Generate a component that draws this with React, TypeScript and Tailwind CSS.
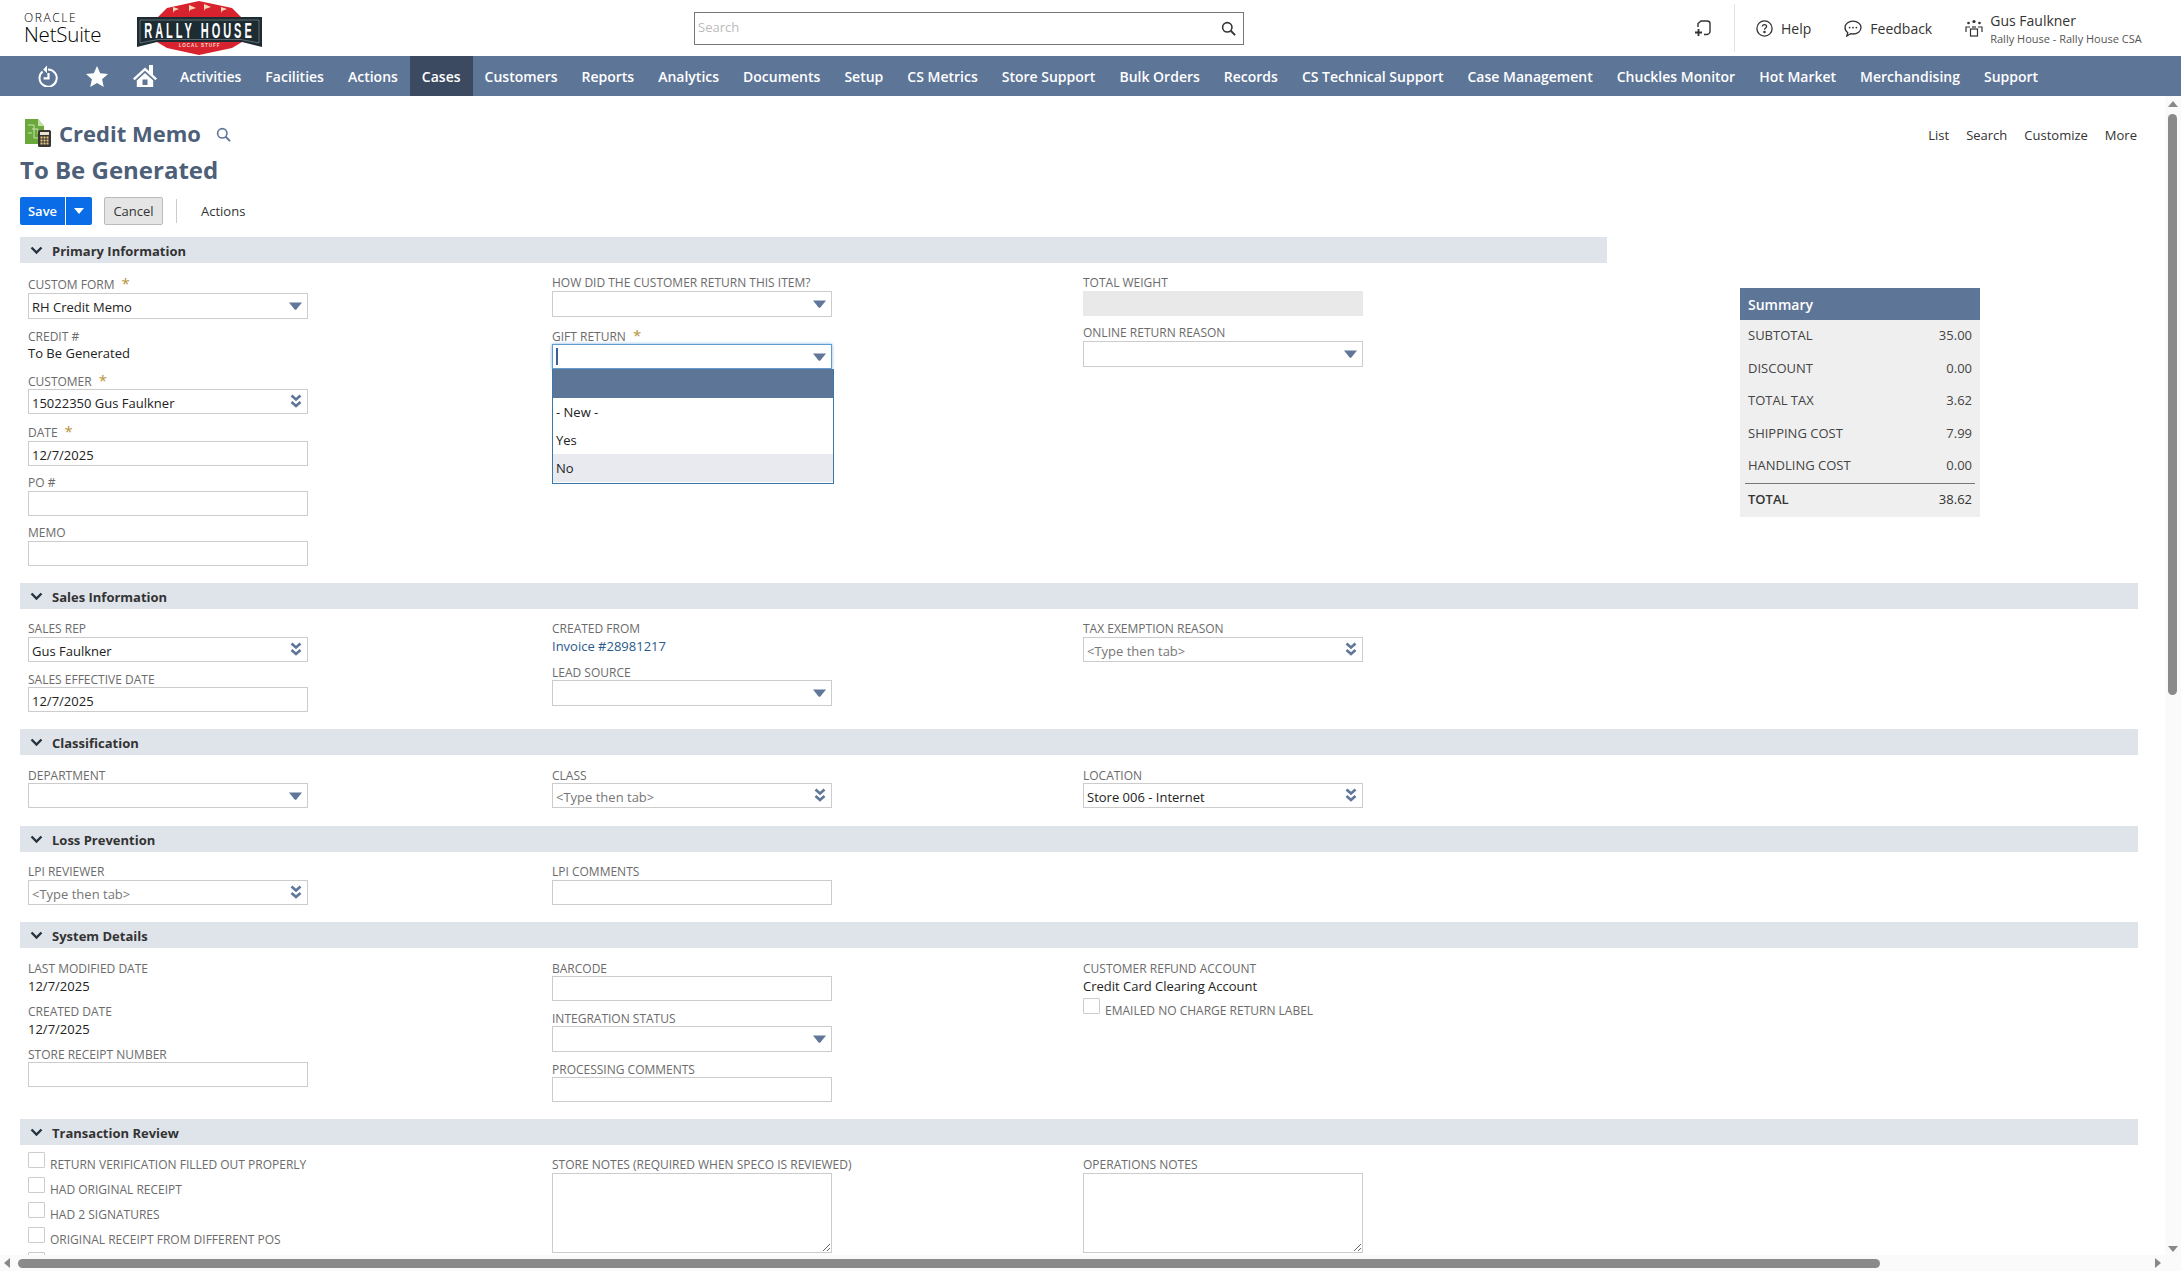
import { ReactNode } from "react"

const navItems = [
  "Activities",
  "Facilities",
  "Actions",
  "Cases",
  "Customers",
  "Reports",
  "Analytics",
  "Documents",
  "Setup",
  "CS Metrics",
  "Store Support",
  "Bulk Orders",
  "Records",
  "CS Technical Support",
  "Case Management",
  "Chuckles Monitor",
  "Hot Market",
  "Merchandising",
  "Support",
]

const summaryRows = [
  ["SUBTOTAL", "35.00"],
  ["DISCOUNT", "0.00"],
  ["TOTAL TAX", "3.62"],
  ["SHIPPING COST", "7.99"],
  ["HANDLING COST", "0.00"],
]

const reviewChecks = [
  "RETURN VERIFICATION FILLED OUT PROPERLY",
  "HAD ORIGINAL RECEIPT",
  "HAD 2 SIGNATURES",
  "ORIGINAL RECEIPT FROM DIFFERENT POS",
  "",
]

const RallyHouseLogo = () => (
  <svg width="125" height="54" viewBox="0 0 125 54">
    <polygon points="20,17 30,7 62,0 95,7 105,17 105,41 95,47 62,54 30,47 20,41" fill="#d8232e" />
    <polygon points="0,16 125,16 125,46 105,41 20,41 0,46" fill="#1d2b33" />
    <polygon points="3,19 122,19 122,42 104,38.5 21,38.5 3,42" fill="none" stroke="#8d979c" strokeWidth="0.6" />
    <polygon points="36,12 36,6 42,8 37,10" fill="#f3d9b8" />
    <polygon points="52,11 52,4 59,7 53,9" fill="#f3d9b8" />
    <polygon points="67,10 67,3 74,6 68,8" fill="#f3d9b8" />
    <polygon points="84,12 84,6 90,8 85,10" fill="#f3d9b8" />
    <text
      x="125"
      y="37.5"
      textAnchor="middle"
      fontFamily="Liberation Sans"
      fontWeight="700"
      fontSize="22"
      letterSpacing="6"
      transform="scale(0.5 1)"
      fill="#fff"
    >
      RALLY HOUSE
    </text>
    <text
      x="62.5"
      y="46"
      textAnchor="middle"
      fontFamily="Liberation Sans"
      fontWeight="700"
      fontSize="4.6"
      letterSpacing="0.9"
      fill="#f6d7c8"
    >
      LOCAL STUFF
    </text>
  </svg>
)

const HistoryIcon = () => (
  <svg width="20" height="22" viewBox="0 0 20 22" fill="none" stroke="#fff" strokeWidth="2">
    <path d="M4.6 6.4 A8.6 8.6 0 1 0 10 4.4" />
    <polygon points="9,0.5 9,8.2 5.2,4.4" fill="#fff" stroke="none" />
    <path d="M10.5 8v5.4H5.6" strokeWidth="2.2" />
  </svg>
)

const StarIcon = () => (
  <svg width="22" height="21" viewBox="0 0 22 21" fill="#fff">
    <polygon points="11,0 14.2,7.2 22,8 16.1,13.2 17.8,21 11,17 4.2,21 5.9,13.2 0,8 7.8,7.2" />
  </svg>
)

const HomeIcon = () => (
  <svg width="24" height="22" viewBox="0 0 24 22" fill="#fff">
    <polygon points="12,2.5 0,13.5 1.6,15.2 12,5.8 22.4,15.2 24,13.5 20,9.8 20,0 16,0 16,6" />
    <path fillRule="evenodd" d="M12 8 L3.8 15.4 V22 H20.2 V15.4 Z M9.5 14.5 H14.5 V20 H9.5 Z" />
  </svg>
)

const CreditMemoIcon = () => (
  <svg width="26" height="28" viewBox="0 0 26 28">
    <polygon points="0,0 13,0 19,7 19,25 0,25" fill="#6aa83b" />
    <polygon points="13,0 19,7 13,7" fill="#c7dfa6" />
    <path d="M3 6h6v13h9M7 10h6v5M3 14h4" stroke="#d6e8bd" strokeWidth="0.9" fill="none" />
    <rect x="13" y="11" width="13" height="17" rx="1.5" fill="#3a3530" />
    <rect x="15" y="13" width="9" height="3" fill="#e8e4d2" />
    <path d="M15.5 18.5h8M15.5 21.5h8M15.5 24.5h8" stroke="#e8c986" strokeWidth="2" strokeDasharray="2 1" />
  </svg>
)

const SearchGlyph = ({ size, color }: { size: number; color: string }) => (
  <svg width={size} height={size} viewBox="0 0 16 16" fill="none" stroke={color} strokeWidth="1.7">
    <circle cx="6.7" cy="6.7" r="5" />
    <path d="M10.4 10.4L15 15" strokeWidth="2" />
  </svg>
)

const Chevron = () => (
  <svg width="13" height="9" viewBox="0 0 13 9" fill="none" stroke="#26323d" strokeWidth="2.4">
    <path d="M1.5 1.5L6.5 6.5L11.5 1.5" />
  </svg>
)

const Caret = () => (
  <svg width="13" height="8" viewBox="0 0 13 8" fill="#607799">
    <path d="M0 0.5H13L7.4 7.4Q6.5 8 5.6 7.4Z" />
  </svg>
)

const DoubleCaret = () => (
  <svg width="12" height="15" viewBox="0 0 12 15" fill="none" stroke="#607799" strokeWidth="2.7">
    <path d="M1.5 1.5L6 5.5L10.5 1.5" />
    <path d="M1.5 8L6 12L10.5 8" />
  </svg>
)

const Label = ({ children, req, className = "" }: { children: ReactNode; req?: boolean; className?: string }) => (
  <div className={`h-4 text-[12px] leading-[18px] text-[#6b6b6b] font-normal whitespace-nowrap ${className}`}>
    {children}
    {req && <span className="ml-[7px] text-[15px] leading-3 text-[#b8923a]">*</span>}
  </div>
)

const Value = ({ children, className = "" }: { children: ReactNode; className?: string }) => (
  <div className={`h-4 text-[13px] leading-4 text-[#222] whitespace-nowrap ${className}`}>{children}</div>
)

const Box = ({
  value,
  muted,
  arrow,
  className = "h-[25px]",
}: {
  value?: string
  muted?: boolean
  arrow?: "single" | "double"
  className?: string
}) => (
  <div className={`flex w-[280px] items-center justify-between border border-[#ccc] bg-white pl-[3px] pr-[5px] ${className}`}>
    <span className={`pt-[2px] text-[13px] leading-4 whitespace-nowrap ${muted ? "text-[#777]" : "text-[#222]"}`}>{value}</span>
    {arrow === "single" && <Caret />}
    {arrow === "double" && <DoubleCaret />}
  </div>
)

const Band = ({ title, className = "" }: { title: string; className?: string }) => (
  <div className={`flex h-[26px] items-center bg-[#dfe4eb] pl-[10px] ${className}`}>
    <Chevron />
    <span className="ml-[9px] pt-[2px] text-[13px] leading-4 font-bold text-[#333]">{title}</span>
  </div>
)

const Section = ({ title, children, className = "" }: { title: string; children: ReactNode; className?: string }) => (
  <section className={className}>
    <Band title={title} />
    <div className="grid grid-cols-[524px_531px_1fr] pl-2">{children}</div>
  </section>
)

const Check = ({ label, className = "" }: { label: string; className?: string }) => (
  <div className={`flex ${className}`}>
    <div className="h-[16px] w-[17px] shrink-0 rounded-[1px] border border-[#ccc] bg-white" />
    <span className="ml-[5px] mt-[4px] h-4 text-[12px] leading-[18px] text-[#6b6b6b] whitespace-nowrap">{label}</span>
  </div>
)

const Notes = ({ className = "" }: { className?: string }) => (
  <textarea readOnly className={`block h-[80px] w-[280px] border border-[#ccc] bg-white ${className}`} />
)

const TopBar = () => (
  <header className="flex h-14 shrink-0 items-center bg-white">
    <div className="ml-6 w-[113px] shrink-0 text-black">
      <div className="h-[12px] text-[12px] leading-[12px] tracking-[1.6px] font-light">ORACLE</div>
      <div className="text-[20.5px] leading-[20px] font-light tracking-[-0.2px]">NetSuite</div>
    </div>
    <RallyHouseLogo />
    <div className="ml-[432px] flex h-[33px] w-[550px] items-center justify-between border border-[#777] pl-[3px] pr-[7px]">
      <span className="text-[13px] text-[#bbb]">Search</span>
      <SearchGlyph size={15} color="#333" />
    </div>
    <svg className="ml-[451px]" width="16" height="17" viewBox="0 0 16 17" fill="none" stroke="#333" strokeWidth="1.4">
      <path d="M3 7V3.5L6 1h6c1.5 0 3 1 3 2.5v8c0 1.5-1.5 3-3 3H9" />
      <path d="M0 12.5h7M3.5 9v7" strokeWidth="1.8" />
    </svg>
    <div className="ml-[23px] h-[48px] w-px bg-[#e3e3e3]" />
    <svg className="ml-[21px]" width="17" height="17" viewBox="0 0 17 17" fill="none" stroke="#333" strokeWidth="1.3">
      <circle cx="8.5" cy="8.5" r="7.6" />
      <path d="M6.4 6.6c0-1.3 1-2 2.1-2s2.1.8 2.1 1.9c0 1.6-2.1 1.5-2.1 3.2" />
      <circle cx="8.5" cy="12" r="0.6" fill="#333" />
    </svg>
    <span className="ml-2 text-[14px] text-[#333]">Help</span>
    <svg className="ml-[33px]" width="18" height="17" viewBox="0 0 18 17" fill="none" stroke="#333" strokeWidth="1.3">
      <path d="M9 1.2c4.4 0 8 2.8 8 6.4S13.4 14 9 14c-.8 0-1.6-.1-2.3-.3L2.8 16l1-3.3C2 11.5 1 9.7 1 7.6 1 4 4.6 1.2 9 1.2Z" />
      <circle cx="5.6" cy="7.6" r="0.9" fill="#333" stroke="none" />
      <circle cx="9" cy="7.6" r="0.9" fill="#333" stroke="none" />
      <circle cx="12.4" cy="7.6" r="0.9" fill="#333" stroke="none" />
    </svg>
    <span className="ml-2 text-[14px] text-[#333]">Feedback</span>
    <svg className="ml-[33px]" width="18" height="18" viewBox="0 0 18 18" fill="none" stroke="#333" strokeWidth="1.2">
      <circle cx="9" cy="2.5" r="1.6" fill="#333" stroke="none" />
      <circle cx="3.5" cy="4" r="1.3" fill="#333" stroke="none" />
      <circle cx="14.5" cy="4" r="1.3" fill="#333" stroke="none" />
      <path d="M1 13V8h4M17 13V8h-4" />
      <rect x="5.5" y="10" width="7" height="7" />
      <path d="M7 8h4" />
    </svg>
    <div className="ml-[7px] pt-[2px] text-[#333]">
      <div className="text-[14px] leading-[18px]">Gus Faulkner</div>
      <div className="mt-[1px] text-[11px] leading-[16px] text-[#555]">Rally House - Rally House CSA</div>
    </div>
  </header>
)

const NavBar = () => (
  <nav className="flex h-10 shrink-0 items-center bg-[#5d7597]">
    <div className="flex w-[168px] shrink-0 items-center pl-[38px]">
      <HistoryIcon />
      <div className="ml-7">
        <StarIcon />
      </div>
      <div className="ml-[25px]">
        <HomeIcon />
      </div>
    </div>
    {navItems.map(item => (
      <div
        key={item}
        className={`flex h-10 items-center px-3 text-[14px] font-semibold whitespace-nowrap text-white ${
          item === "Cases" ? "bg-[#3b4a60]" : ""
        }`}
      >
        {item}
      </div>
    ))}
  </nav>
)

const Summary = () => (
  <aside className="ml-[133px] mt-[51px] h-[229px] w-[240px] shrink-0 bg-[#efefef]">
    <div className="flex h-8 items-center bg-[#5d7597] pl-2 text-[14px] font-semibold text-white">Summary</div>
    <div className="px-2">
      {summaryRows.map(([name, amount]) => (
        <div key={name} className="flex h-[32.5px] items-center justify-between pb-px text-[13px] text-[#444]">
          <span>{name}</span>
          <span>{amount}</span>
        </div>
      ))}
    </div>
    <div className="mx-[5px] border-t border-[#777]" />
    <div className="flex h-[32px] items-center justify-between px-2 text-[13px] text-[#333]">
      <span className="font-semibold">TOTAL</span>
      <span>38.62</span>
    </div>
  </aside>
)

const GiftReturn = () => (
  <div className="relative mt-[11px] w-[280px]">
    <Label req>GIFT RETURN</Label>
    <div className="flex h-[25px] w-[280px] items-center justify-between border border-[#5f9ccf] bg-white pl-[3px] pr-[5px] shadow-[0_0_3px_#7fb4e0]">
      <div className="h-[17px] w-[2px] bg-[#3c5f9a]" />
      <Caret />
    </div>
    <div className="absolute left-0 top-[41px] z-10 w-[282px] border border-t-0 border-[#3a78a8] bg-white pb-px text-[13px] text-[#222]">
      <div className="h-[29px] bg-[#5d7597]" />
      <div className="flex h-[28px] items-center pl-[3px] pt-[2px]">- New -</div>
      <div className="flex h-[28px] items-center pl-[3px] pt-[2px]">Yes</div>
      <div className="flex h-[28px] items-center bg-[#e8eaf0] pl-[3px] pt-[2px]">No</div>
    </div>
  </div>
)

export default function App() {
  return (
    <div className="relative flex h-screen flex-col overflow-hidden bg-white [font-family:'Open_Sans',sans-serif]">
      <TopBar />
      <NavBar />

      <main className="min-h-0 flex-1 overflow-hidden pl-5">
        <div className="w-[2118px]">
          <div className="flex justify-between pt-[19px]">
            <div className="flex h-9 items-center pl-[5px]">
              <CreditMemoIcon />
              <h1 className="ml-2 text-[22px] font-bold text-[#4d5f79]">Credit Memo</h1>
              <div className="ml-[15px] mt-[3px]">
                <SearchGlyph size={15} color="#5d7597" />
              </div>
            </div>
            <div className="flex h-9 items-center pr-px pt-[5px] text-[13px] text-[#333]">
              <span>List</span>
              <span className="ml-[17px]">Search</span>
              <span className="ml-[17px]">Customize</span>
              <span className="ml-[17px]">More</span>
            </div>
          </div>
          <h2 className="mt-[3px] h-8 text-[24px] leading-8 font-bold text-[#4d5f79]">To Be Generated</h2>

          <div className="mt-[11px] flex h-7 items-center">
            <div className="flex h-7 w-[72px] items-center rounded-[2px] bg-[#0b6ce8] text-[13px] font-semibold text-white">
              <span className="h-7 w-[46px] border-r border-white text-center leading-7">Save</span>
              <svg className="ml-[8px]" width="10" height="6" viewBox="0 0 10 6" fill="#fff">
                <path d="M0 0H10L5 6Z" />
              </svg>
            </div>
            <div className="ml-3 flex h-7 w-[59px] items-center justify-center rounded-[2px] border border-[#bbb] bg-[#e5e5e5] pt-[2px] text-[13px] text-[#333]">
              Cancel
            </div>
            <div className="ml-[13px] h-6 w-px bg-[#ccc]" />
            <span className="ml-6 pt-[2px] text-[13px] text-[#333]">Actions</span>
          </div>

          <div className="mb-[17px] mt-3 flex">
            <div className="w-[1587px] shrink-0">
              <Band title="Primary Information" />
              <div className="grid grid-cols-[524px_531px_1fr] pl-2">
                <div className="pt-[13px]">
                  <Label req>CUSTOM FORM</Label>
                  <Box className="mt-px h-[26px]" value="RH Credit Memo" arrow="single" />
                  <Label className="mt-[9px]">CREDIT #</Label>
                  <Value className="mt-px">To Be Generated</Value>
                  <Label className="mt-3" req>
                    CUSTOMER
                  </Label>
                  <Box value="15022350 Gus Faulkner" arrow="double" />
                  <Label className="mt-[10px]" req>
                    DATE
                  </Label>
                  <Box className="mt-px h-[25px]" value="12/7/2025" />
                  <Label className="mt-2">PO #</Label>
                  <Box className="mt-px h-[25px]" />
                  <Label className="mt-2">MEMO</Label>
                  <Box className="mt-px h-[25px]" />
                </div>
                <div className="pt-[11px]">
                  <Label>HOW DID THE CUSTOMER RETURN THIS ITEM?</Label>
                  <Box className="mt-px h-[26px]" arrow="single" />
                  <GiftReturn />
                </div>
                <div className="pt-[11px]">
                  <Label>TOTAL WEIGHT</Label>
                  <div className="mt-px h-[25px] w-[280px] bg-[#e9e9e9]" />
                  <Label className="mt-2">ONLINE RETURN REASON</Label>
                  <Box className="mt-px h-[26px]" arrow="single" />
                </div>
              </div>
            </div>
            <Summary />
          </div>

          <Section title="Sales Information" className="mb-[17px]">
            <div className="pt-[11px]">
              <Label>SALES REP</Label>
              <Box className="mt-px h-[25px]" value="Gus Faulkner" arrow="double" />
              <Label className="mt-[9px]">SALES EFFECTIVE DATE</Label>
              <Box value="12/7/2025" />
            </div>
            <div className="pt-[11px]">
              <Label>CREATED FROM</Label>
              <Value className="mt-[2px] !text-[#2a5a8c]">Invoice #28981217</Value>
              <Label className="mt-[10px]">LEAD SOURCE</Label>
              <Box className="h-[26px]" arrow="single" />
            </div>
            <div className="pt-[11px]">
              <Label>TAX EXEMPTION REASON</Label>
              <Box className="mt-px h-[25px]" value="<Type then tab>" muted arrow="double" />
            </div>
          </Section>

          <Section title="Classification" className="mb-[18px]">
            <div className="pt-3">
              <Label>DEPARTMENT</Label>
              <Box arrow="single" />
            </div>
            <div className="pt-3">
              <Label>CLASS</Label>
              <Box value="<Type then tab>" muted arrow="double" />
            </div>
            <div className="pt-3">
              <Label>LOCATION</Label>
              <Box value="Store 006 - Internet" arrow="double" />
            </div>
          </Section>

          <Section title="Loss Prevention" className="mb-[17px]">
            <div className="pt-[11px]">
              <Label>LPI REVIEWER</Label>
              <Box className="mt-px h-[25px]" value="<Type then tab>" muted arrow="double" />
            </div>
            <div className="pt-[11px]">
              <Label>LPI COMMENTS</Label>
              <Box className="mt-px h-[25px]" />
            </div>
          </Section>

          <Section title="System Details" className="mb-[17px]">
            <div className="pt-3">
              <Label>LAST MODIFIED DATE</Label>
              <Value className="mt-[2px]">12/7/2025</Value>
              <Label className="mt-[9px]">CREATED DATE</Label>
              <Value className="mt-[2px]">12/7/2025</Value>
              <Label className="mt-[9px]">STORE RECEIPT NUMBER</Label>
              <Box />
            </div>
            <div className="pt-3">
              <Label>BARCODE</Label>
              <Box />
              <Label className="mt-[9px]">INTEGRATION STATUS</Label>
              <Box className="h-[26px]" arrow="single" />
              <Label className="mt-[9px]">PROCESSING COMMENTS</Label>
              <Box />
            </div>
            <div className="pt-3">
              <Label>CUSTOMER REFUND ACCOUNT</Label>
              <Value className="mt-[2px]">Credit Card Clearing Account</Value>
              <Check className="mt-1" label="EMAILED NO CHARGE RETURN LABEL" />
            </div>
          </Section>

          <Section title="Transaction Review">
            <div className="pt-[7px]">
              {reviewChecks.map((check, i) => (
                <Check key={i} className="h-[25px]" label={check} />
              ))}
            </div>
            <div className="pt-[11px]">
              <Label>STORE NOTES (REQUIRED WHEN SPECO IS REVIEWED)</Label>
              <Notes className="mt-px" />
            </div>
            <div className="pt-[11px]">
              <Label>OPERATIONS NOTES</Label>
              <Notes className="mt-px" />
            </div>
          </Section>
        </div>
      </main>

      {/* fake scrollbars, they sit over the page */}
      <div className="absolute bottom-0 left-0 right-0 flex h-4 items-center bg-[#fafafa] pl-[18px]">
        <div className="h-[9px] w-[1862px] rounded-full bg-[#8a8a8a]" />
        <svg className="absolute left-[4px] top-[3px]" width="6" height="10" viewBox="0 0 6 10" fill="#888">
          <path d="M6 0V10L0 5Z" />
        </svg>
        <svg className="absolute left-[2155px] top-[3px]" width="6" height="10" viewBox="0 0 6 10" fill="#888">
          <path d="M0 0V10L6 5Z" />
        </svg>
      </div>
      <div className="absolute bottom-[16px] right-0 top-[96px] w-[16px] bg-[#fafafa]">
        <svg className="absolute left-[3px] top-[5px]" width="10" height="6" viewBox="0 0 10 6" fill="#888">
          <path d="M0 6H10L5 0Z" />
        </svg>
        <div className="absolute left-[3px] top-[18px] h-[581px] w-[9px] rounded-full bg-[#8a8a8a]" />
        <svg className="absolute bottom-[3px] left-[3px]" width="10" height="6" viewBox="0 0 10 6" fill="#888">
          <path d="M0 0H10L5 6Z" />
        </svg>
      </div>
    </div>
  )
}
